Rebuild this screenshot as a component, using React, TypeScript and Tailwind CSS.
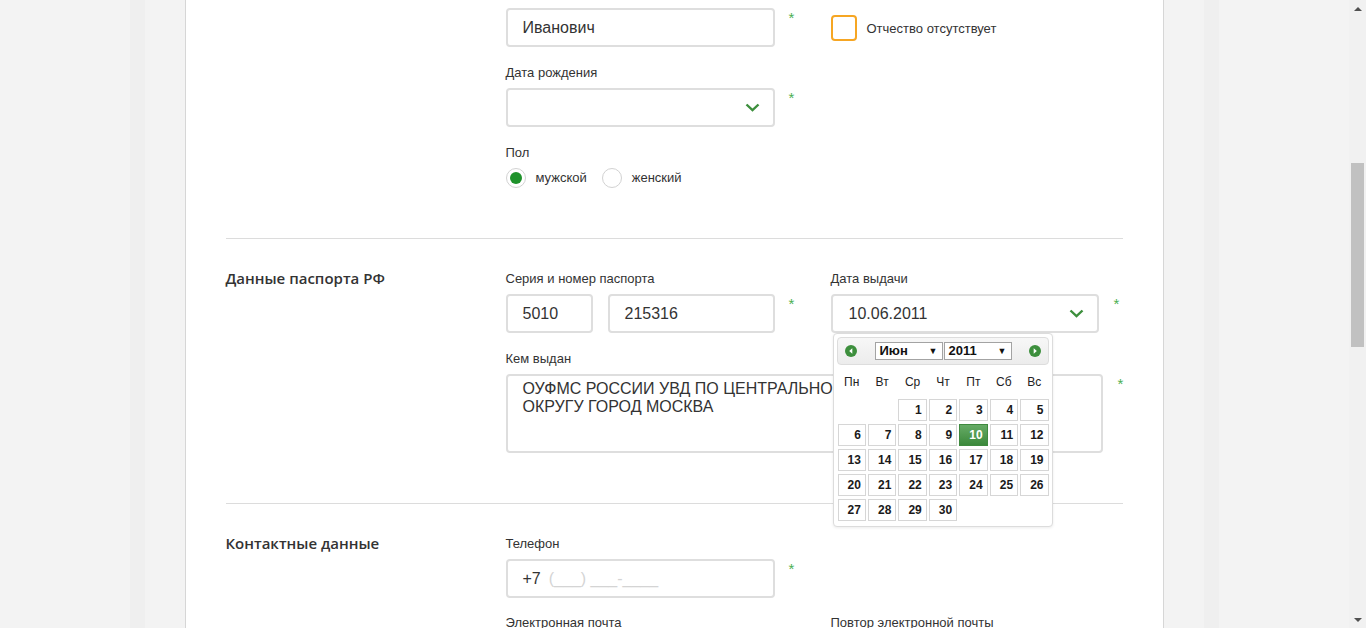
import React from "react";

type Day = number | null;

const weeks: Day[][] = [
  [null, null, 1, 2, 3, 4, 5],
  [6, 7, 8, 9, 10, 11, 12],
  [13, 14, 15, 16, 17, 18, 19],
  [20, 21, 22, 23, 24, 25, 26],
  [27, 28, 29, 30, null, null, null],
];

const dayNames = ["Пн", "Вт", "Ср", "Чт", "Пт", "Сб", "Вс"];

function Label({ children, className = "" }: { children: React.ReactNode; className?: string }) {
  return <div className={`text-[13px] leading-[16px] text-[#333] ${className}`}>{children}</div>;
}

function Star({ className = "" }: { className?: string }) {
  return (
    <span className={`block text-[15px] leading-[15px] text-[#4caf50] ${className}`}>*</span>
  );
}

function Chevron() {
  return (
    <svg width="15" height="9" viewBox="0 0 15 9" className="shrink-0">
      <path d="M1.5 1.5 L7.5 7.2 L13.5 1.5" fill="none" stroke="#3d8f3d" strokeWidth="2.4" />
    </svg>
  );
}

function Field({ className = "", children }: { className?: string; children?: React.ReactNode }) {
  return (
    <div
      className={`flex h-[39px] items-center rounded-[4px] border-2 border-[#dedede] bg-white px-[15px] text-[16px] text-[#333] ${className}`}
    >
      {children}
    </div>
  );
}

function Select({ className = "", value }: { className?: string; value?: string }) {
  return (
    <div
      className={`flex h-[39px] items-center justify-between rounded-[4px] border-2 border-[#dedede] bg-white pl-[16px] pr-[13px] text-[16px] text-[#333] ${className}`}
    >
      <span>{value}</span>
      <Chevron />
    </div>
  );
}

function NavIcon({ dir }: { dir: "prev" | "next" }) {
  return (
    <svg width="12" height="12" viewBox="0 0 12 12" className="shrink-0">
      <circle cx="6" cy="6" r="6" fill="#3d8f3d" />
      {dir === "prev" ? (
        <path d="M7.3 3.3 L4.2 6 L7.3 8.7 Z" fill="#fff" />
      ) : (
        <path d="M4.7 3.3 L7.8 6 L4.7 8.7 Z" fill="#fff" />
      )}
    </svg>
  );
}

function MiniSelect({ value, className = "" }: { value: string; className?: string }) {
  return (
    <div
      className={`flex h-[18px] items-center justify-between border border-[#a3a3a3] bg-white pl-[4px] pr-[4px] text-[13px] font-bold text-[#111] ${className}`}
    >
      <span>{value}</span>
      <span className="text-[9px] leading-none">▼</span>
    </div>
  );
}

function Calendar() {
  return (
    <div className="absolute left-[2px] top-[63px] z-10 w-[220px] rounded-[4px] border border-[#dcdcdc] bg-white p-[3px] pb-[5px] shadow-[0_1px_3px_rgba(0,0,0,0.08)]">
      <div className="flex h-[28px] items-center rounded-[4px] border border-[#dddddd] bg-linear-to-b from-[#f7f7f7] to-[#ececec] px-[7px]">
        <NavIcon dir="prev" />
        <MiniSelect value="Июн" className="ml-[18px] w-[68px]" />
        <MiniSelect value="2011" className="ml-[1px] w-[68px]" />
        <div className="flex-1" />
        <NavIcon dir="next" />
      </div>
      <div className="ml-[1px] flex h-[34px] w-[211px] items-center gap-x-[2px] text-[12px] text-[#222]">
        {dayNames.map((d) => (
          <span key={d} className="flex-1 text-center">
            {d}
          </span>
        ))}
      </div>
      <div className="ml-[1px] grid w-[211px] grid-cols-7 gap-x-[2px] gap-y-[3px]">
        {weeks.flat().map((d, i) =>
          d === null ? (
            <div key={i} className="h-[22px]" />
          ) : (
            <div
              key={i}
              className={
                d === 10
                  ? "flex h-[22px] items-center justify-end border border-[#3f8a3f] bg-linear-to-b from-[#66ab66] to-[#3b893b] pr-[4px] text-[12px] font-bold text-white"
                  : "flex h-[22px] items-center justify-end border border-[#d6d6d6] bg-white pr-[4px] text-[12px] font-bold text-[#1a1a1a]"
              }
            >
              {d}
            </div>
          ),
        )}
      </div>
    </div>
  );
}

function Radio({ checked, label }: { checked?: boolean; label: string }) {
  return (
    <div className="flex items-center gap-[10px]">
      <span className="flex h-[20px] w-[20px] items-center justify-center rounded-full border border-[#d2d2d2] bg-white">
        {checked ? <span className="h-[12px] w-[12px] rounded-full bg-[#1f922b]" /> : null}
      </span>
      <span className="text-[13px] text-[#333]">{label}</span>
    </div>
  );
}

function SectionTitle({ children }: { children?: React.ReactNode }) {
  return (
    <div className="font-['Open_Sans',Arial,sans-serif] text-[15px] font-semibold leading-[16px] text-[#333]">
      {children}
    </div>
  );
}

function Scrollbar() {
  return (
    <div className="flex w-[17px] shrink-0 flex-col bg-[#f1f1f1]">
      <div className="flex h-[17px] items-center justify-center">
        <span className="h-0 w-0 border-x-[4px] border-b-[4px] border-x-transparent border-b-[#505050]" />
      </div>
      <div className="h-[146px]" />
      <div className="mx-[2px] h-[184px] bg-[#c1c1c1]" />
      <div className="flex-1" />
      <div className="flex h-[17px] items-center justify-center">
        <span className="h-0 w-0 border-x-[4px] border-t-[4px] border-x-transparent border-t-[#505050]" />
      </div>
    </div>
  );
}

export default function App() {
  return (
    <div className="flex h-[628px] w-full overflow-hidden bg-[#f3f3f3] font-['Liberation_Sans',Arial,sans-serif] text-[#333]">
      <div className="flex min-w-0 flex-1 justify-center">
        <div className="flex w-[1090px] shrink-0">
          <div className="w-[15px] bg-[#efefef]" />
          <div className="w-[40px]" />
          <main className="w-[979px] border-x border-[#d6d6d6] bg-white px-[40px] pt-[8px]">
            {/* ФИО / дата рождения / пол */}
            <div className="grid grid-cols-[280px_1fr]">
              <div />
              <div>
                <div className="flex items-start">
                  <Field className="w-[269px]">Иванович</Field>
                  <div className="w-[56px] pl-[14px] pt-[2px]">
                    <Star />
                  </div>
                  <div className="flex h-[39px] items-center gap-[10px]">
                    <span className="h-[26px] w-[26px] rounded-[4px] border-2 border-[#f6a623] bg-white" />
                    <span className="pt-[3px] text-[13px] text-[#333]">Отчество отсутствует</span>
                  </div>
                </div>
                <Label className="mt-[18px]">Дата рождения</Label>
                <div className="mt-[7px] flex items-start">
                  <Select className="w-[269px]" />
                  <div className="w-[56px] pl-[14px] pt-[2px]">
                    <Star />
                  </div>
                </div>
                <Label className="mt-[18px]">Пол</Label>
                <div className="mt-[7px] flex h-[20px] items-center gap-[15px]">
                  <Radio checked label="мужской" />
                  <Radio label="женский" />
                </div>
              </div>
            </div>

            <div className="mt-[50px] border-t border-[#dcdcdc]" />

            {/* Паспорт */}
            <div className="grid grid-cols-[280px_1fr] pt-[31px]">
              <SectionTitle>Данные паспорта РФ</SectionTitle>
              <div>
                <div className="flex items-start">
                  <div className="w-[269px]">
                    <Label className="pt-[1px]">Серия и номер паспорта</Label>
                    <div className="mt-[7px] flex gap-[15px]">
                      <Field className="w-[87px]">5010</Field>
                      <Field className="w-[167px]">215316</Field>
                    </div>
                  </div>
                  <div className="w-[56px] pl-[14px] pt-[26px]">
                    <Star />
                  </div>
                  <div className="relative w-[268px]">
                    <Label className="pt-[1px]">Дата выдачи</Label>
                    <Select className="mt-[7px] w-[268px]" value="10.06.2011" />
                    <Calendar />
                  </div>
                  <div className="pl-[15px] pt-[26px]">
                    <Star />
                  </div>
                </div>
                <Label className="mt-[18px]">Кем выдан</Label>
                <div className="mt-[7px] flex items-start">
                  <div className="h-[79px] w-[597px] rounded-[4px] border-2 border-[#dedede] bg-white px-[15px] pt-[4px] text-[16px] leading-[18px] text-[#333]">
                    ОУФМС РОССИИ УВД ПО ЦЕНТРАЛЬНОМУ АДМИНИСТРАТИВНОМУ
                    <br />
                    ОКРУГУ ГОРОД МОСКВА
                  </div>
                  <div className="pl-[15px] pt-[2px]">
                    <Star />
                  </div>
                </div>
              </div>
            </div>

            <div className="mt-[50px] border-t border-[#dcdcdc]" />

            {/* Контакты */}
            <div className="grid grid-cols-[280px_1fr] pt-[31px]">
              <SectionTitle>Контактные данные</SectionTitle>
              <div>
                <Label className="pt-[1px]">Телефон</Label>
                <div className="mt-[7px] flex items-start">
                  <Field className="w-[269px]">
                    <span>+7</span>
                    <span className="ml-[8px] text-[#d4d4d4]">(___) ___-____</span>
                  </Field>
                  <div className="w-[56px] pl-[14px] pt-[2px]">
                    <Star />
                  </div>
                </div>
                <div className="mt-[17px] flex">
                  <Label className="w-[325px]">Электронная почта</Label>
                  <Label>Повтор электронной почты</Label>
                </div>
              </div>
            </div>
          </main>
          <div className="w-[40px]" />
          <div className="w-[15px] bg-[#efefef]" />
        </div>
      </div>
      <Scrollbar />
    </div>
  );
}
